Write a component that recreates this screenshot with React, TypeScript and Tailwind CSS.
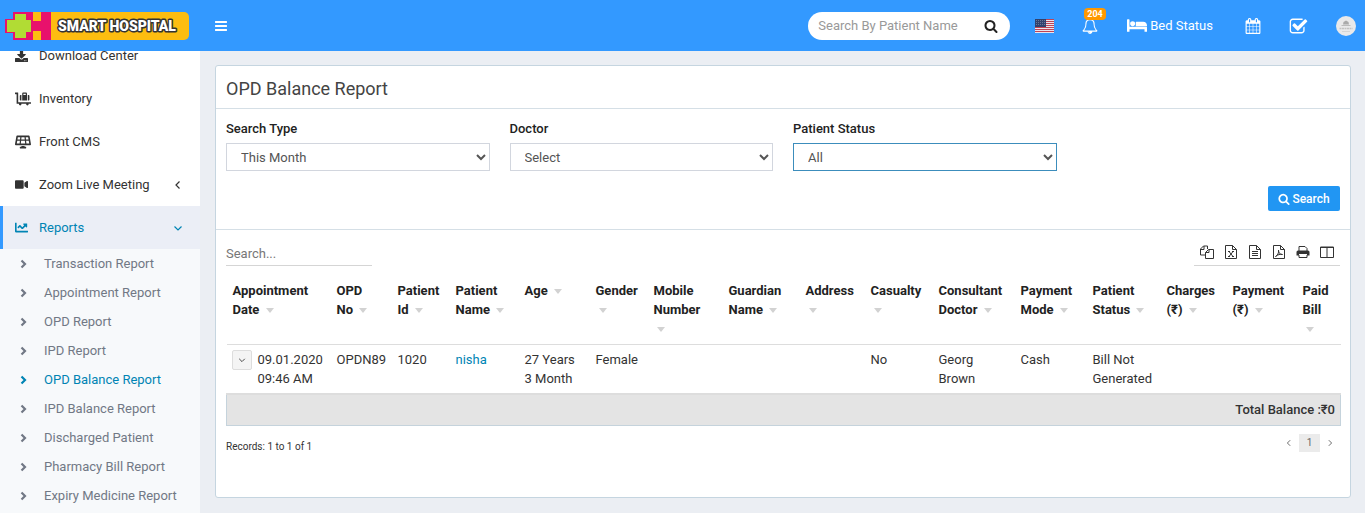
import React from "react";
import { FaChartLine, FaDownload, FaLuggageCart, FaSolarPanel, FaVideo } from "react-icons/fa";

const glyphs = {
  bars: "M1664 1344v128q0 26-19 45t-45 19h-1408q-26 0-45-19t-19-45v-128q0-26 19-45t45-19h1408q26 0 45 19t19 45zm0-512v128q0 26-19 45t-45 19h-1408q-26 0-45-19t-19-45v-128q0-26 19-45t45-19h1408q26 0 45 19t19 45zm0-512v128q0 26-19 45t-45 19h-1408q-26 0-45-19t-19-45v-128q0-26 19-45t45-19h1408q26 0 45 19t19 45z",
  search: "M1216 832q0-185-131.5-316.5t-316.5-131.5-316.5 131.5-131.5 316.5 131.5 316.5 316.5 131.5 316.5-131.5 131.5-316.5zm512 832q0 52-38 90t-90 38q-54 0-90-38l-343-342q-179 124-399 124-143 0-273.5-55.5t-225-150-150-225-55.5-273.5 55.5-273.5 150-225 225-150 273.5-55.5 273.5 55.5 225 150 150 225 55.5 273.5q0 220-124 399l343 343q37 37 37 90z",
  check: "M1472 930v318q0 119-84.5 203.5t-203.5 84.5h-832q-119 0-203.5-84.5t-84.5-203.5v-832q0-119 84.5-203.5t203.5-84.5h832q63 0 117 25 15 7 18 23 3 17-9 29l-49 49q-10 10-23 10-3 0-9-2-23-6-45-6h-832q-66 0-113 47t-47 113v832q0 66 47 113t113 47h832q66 0 113-47t47-113v-254q0-13 9-22l64-64q10-10 23-10 6 0 12 3 20 8 20 29zm231-489l-814 814q-24 24-57 24t-57-24l-430-430q-24-24-24-57t24-57l110-110q24-24 57-24t57 24l263 263 647-647q24-24 57-24t57 24l110 110q24 24 24 57t-24 57z",
  bed: "M256 1024h1728q26 0 45 19t19 45v448h-256v-256h-1536v256h-256v-1216q0-26 19-45t45-19h128q26 0 45 19t19 45v704zm576-320q0-106-75-181t-181-75-181 75-75 181 75 181 181 75 181-75 75-181zm1216 256v-64q0-159-112.5-271.5t-271.5-112.5h-704q-26 0-45 19t-19 45v384h1152z",
  calendar: "M192 1664h288v-288h-288v288zm352 0h320v-288h-320v288zm-352-352h288v-320h-288v320zm352 0h320v-320h-320v320zm-352-384h288v-288h-288v288zm736 736h320v-288h-320v288zm-384-736h320v-288h-320v288zm768 736h288v-288h-288v288zm-384-352h320v-320h-320v320zm-352-864v-288q0-13-9.5-22.5t-22.5-9.5h-64q-13 0-22.5 9.5t-9.5 22.5v288q0 13 9.5 22.5t22.5 9.5h64q13 0 22.5-9.5t9.5-22.5zm736 864h288v-320h-288v320zm-384-384h320v-288h-320v288zm384 0h288v-288h-288v288zm32-480v-288q0-13-9.5-22.5t-22.5-9.5h-64q-13 0-22.5 9.5t-9.5 22.5v288q0 13 9.5 22.5t22.5 9.5h64q13 0 22.5-9.5t9.5-22.5zm384-64v1280q0 52-38 90t-90 38h-1408q-52 0-90-38t-38-90v-1280q0-52 38-90t90-38h128v-96q0-66 47-113t113-47h64q66 0 113 47t47 113v96h384v-96q0-66 47-113t113-47h64q66 0 113 47t47 113v96h128q52 0 90 38t38 90z",
  bell: "M912 1696q0-16-16-16-59 0-101.5-42.5t-42.5-101.5q0-16-16-16t-16 16q0 73 51.5 124.5t124.5 51.5q16 0 16-16zm-666-288h1300q-266-300-266-832 0-51-24-105t-69-103-121.5-80.5-169.5-31.5-169.5 31.5-121.5 80.5-69 103-24 105q0 532-266 832zm1482 0q0 52-38 90t-90 38h-448q0 106-75 181t-181 75-181-75-75-181h-448q-52 0-90-38t-38-90q50-42 91-88t85-119.5 74.5-158.5 50-206 19.5-260q0-152 117-282.5t307-158.5q-8-19-8-39 0-40 28-68t68-28 68 28 28 68q0 20-8 39 190 28 307 158.5t117 282.5q0 139 19.5 260t50 206 74.5 158.5 85 119.5 91 88z",
};

function Glyph({ name, className, box = "0 0 1792 1792" }: { name: keyof typeof glyphs; className: string; box?: string }) {
  return (
    <svg viewBox={box} className={className} fill="currentColor" aria-hidden="true">
      <path d={glyphs[name]} />
    </svg>
  );
}

function Angle({ dir, className, weight = 1.2 }: { dir: "left" | "right" | "down"; className: string; weight?: number }) {
  const d = { left: "M6.5 1.5 3 5l3.5 3.5", right: "M3.5 1.5 7 5 3.5 8.5", down: "M1.5 3.5 5 7l3.5-3.5" }[dir];
  return (
    <svg viewBox="0 0 10 10" className={className} fill="none" stroke="currentColor" strokeWidth={weight} aria-hidden="true">
      <path d={d} />
    </svg>
  );
}

function Logo() {
  return (
    <svg viewBox="0 0 184 28" className="h-7 w-[184px]" role="img" aria-label="Smart Hospital">
      <path d="M26 0h153a5 5 0 0 1 5 5v18a5 5 0 0 1-5 5H26z" fill="#fdbd10" />
      <path d="M8 0h20v9h8V0h10v28H36v-9h-8v9H8v-7H0V7h8z" fill="#e8116c" />
      <path d="M10 2h11v6h5v12h-5v6H10v-6H2V8h8z" fill="#b1dc34" />
      <text
        x="53"
        y="19"
        fontFamily="Roboto, sans-serif"
        fontSize="14"
        fontWeight="900"
        fill="#fff"
        stroke="#333"
        strokeWidth="3"
        strokeLinejoin="round"
        paintOrder="stroke"
      >
        SMART HOSPITAL
      </text>
    </svg>
  );
}

function Flag() {
  return (
    <svg viewBox="0 0 19 14" className="h-3.5 w-[19px]" role="img" aria-label="English">
      <rect width="19" height="14" fill="#e9e4ee" />
      {[0, 2, 4, 6, 8, 10, 12].map((y) => (
        <rect key={y} y={y} width="19" height="1" fill="#bf4455" />
      ))}
      <rect width="11" height="8" fill="#31416e" />
      <path d="M1 1.5h10M1 3.5h10M1 5.5h10" stroke="#6b7699" strokeDasharray="1 1" />
    </svg>
  );
}

const menu = [
  { label: "Download Center", icon: <FaDownload className="size-[13px]" /> },
  { label: "Inventory", icon: <FaLuggageCart className="size-4" /> },
  { label: "Front CMS", icon: <FaSolarPanel className="size-4" /> },
  { label: "Zoom Live Meeting", icon: <FaVideo className="size-[13px]" />, more: true },
];

const reports = [
  "Transaction Report",
  "Appointment Report",
  "OPD Report",
  "IPD Report",
  "OPD Balance Report",
  "IPD Balance Report",
  "Discharged Patient",
  "Pharmacy Bill Report",
  "Expiry Medicine Report",
];

function Header() {
  return (
    <header className="flex h-[51px] shrink-0 items-center bg-[#3399ff] text-white">
      <a href="#" className="w-[200px] shrink-0 pl-[5px]">
        <Logo />
      </a>
      <button aria-label="Toggle navigation" className="ml-3.5">
        <Glyph name="bars" className="size-3.5" />
      </button>
      <div className="ml-auto flex items-center">
        <form className="flex h-7 w-[202px] items-center rounded-full bg-white pr-3 pl-2.5">
          <input
            aria-label="Search By Patient Name"
            placeholder="Search By Patient Name"
            className="w-full min-w-0 text-[13px] text-[#444] outline-none placeholder:text-[#999]"
          />
          <button type="button" aria-label="Search" className="text-[#222]">
            <Glyph name="search" className="size-3.5" />
          </button>
        </form>
        <a href="#" className="ml-[25px]">
          <Flag />
        </a>
        <a href="#" aria-label="Notifications" className="relative ml-7">
          <Glyph name="bell" className="size-4" />
          <span className="absolute -top-2.5 left-0.5 rounded-sm bg-[#ff9800] px-[3px] text-[9px] leading-3 font-bold">204</span>
        </a>
        <a href="#" className="ml-[29px] flex items-center gap-[3px] text-[13px]">
          <Glyph name="bed" box="0 128 2048 1536" className="h-[15px] w-5" />
          Bed Status
        </a>
        <a href="#" aria-label="Calendar" className="ml-8">
          <Glyph name="calendar" className="size-4" />
        </a>
        <a href="#" aria-label="Tasks" className="ml-7">
          <Glyph name="check" box="0 0 1792 1664" className="h-[18px] w-[19px]" />
        </a>
        <a href="#" aria-label="Profile" className="mr-[9px] ml-7">
          <svg viewBox="0 0 20 20" className="size-5" aria-hidden="true">
            <circle cx="10" cy="10" r="10" fill="#e9e9ea" />
            <path d="M7 8.500 7.500 6 10 4.500 12.500 6 13 8.500z" fill="#aaa" />
            <path d="M5.500 9.500h9" stroke="#bbb" />
            <path d="M3.500 12.500h13" stroke="#c2c2c2" strokeDasharray="2 .5" strokeWidth="1.500" />
            <path d="M6 15.500h8" stroke="#d5d5d5" />
          </svg>
        </a>
      </div>
    </header>
  );
}

function Sidebar() {
  return (
    <aside className="w-[200px] shrink-0 overflow-hidden bg-[#f7f9fb]">
      <nav className="-mt-[17px]">
        <ul>
          {menu.map((m) => (
            <li key={m.label}>
              <a href="#" className="flex h-[43px] items-center bg-white pl-[15px] text-[13px] text-[#333]">
                <span className="w-6">{m.icon}</span>
                {m.label}
                {m.more && <Angle dir="left" className="mr-[17px] ml-auto size-2.5" />}
              </a>
            </li>
          ))}
          <li>
            <a href="#" className="flex h-[43px] items-center border-l-3 border-[#3399ff] bg-[#ebeef6] pl-3 text-[13px] text-[#0084b4]">
              <span className="w-6">
                <FaChartLine className="size-[13px]" />
              </span>
              Reports
              <Angle dir="down" className="mr-[17px] ml-auto size-2.5" />
            </a>
            <ul>
              {reports.map((r) => (
                <li key={r}>
                  <a
                    href="#"
                    className={
                      "flex h-[29px] items-center pl-[18px] text-[13px] " +
                      (r === "OPD Balance Report" ? "text-[#0084b4]" : "text-[#717885]")
                    }
                  >
                    <Angle dir="right" weight={2.2} className="mr-4 size-2.5" />
                    {r}
                  </a>
                </li>
              ))}
            </ul>
          </li>
        </ul>
      </nav>
    </aside>
  );
}

function Field({ id, label, value, active }: { id: string; label: string; value: string; active?: boolean }) {
  return (
    <div>
      <label htmlFor={id} className="block text-[13px] leading-5 font-medium text-[#222]">
        {label}
      </label>
      <select
        id={id}
        className={"mt-1 h-7 w-full border bg-white pl-2.5 text-[13px] text-[#555] outline-none " + (active ? "border-[#3c8dbc]" : "border-[#d2d6de]")}
      >
        <option>{value}</option>
      </select>
    </div>
  );
}

const page = "M1.500 .5h7l4 4v9h-11zM8.500 .5v4h4";

const tools = [
  { label: "Copy", d: "M5.500 10H.5V4L3.500 1h4v3M.5 4.500h3.500V1M5.500 7.500l3-3h5v9h-8zM5.500 7.500h3.500v-3" },
  { label: "Excel", d: page + "M5 6.500l4 5M9 6.500l-4 5M4 6.500h2M8 6.500h2M4 11.500h2M8 11.500h2" },
  { label: "CSV", d: page + "M4 6.500h6M4 8.500h6M4 10.500h6" },
  { label: "PDF", d: page + "M3.500 11.500c2-1 3.500-3.500 3-6.500C6.500 8 8 9.500 10.500 9.500 8 9 6 9.500 3.500 11.500" },
  { label: "Print", d: "" },
  { label: "Columns", d: "M.5 2h13v10.500H.5zM7 2.500V12M.5 2.500h13" },
];

function ToolIcon({ d }: { d: string }) {
  if (!d) {
    return (
      <svg viewBox="0 0 14 14" className="size-3.5" aria-hidden="true">
        <path d="M3 6V1.500h6l2 2V6M3 10v2.500h8V10" fill="none" stroke="#333" />
        <path d="M2 5.500h10q1.500 0 1.500 1.500V10.500H11V9H3v1.500H.5V7q0-1.500 1.500-1.500z" fill="#333" />
      </svg>
    );
  }
  return (
    <svg viewBox="0 0 14 14" className="size-3.5" fill="none" stroke="#333" aria-hidden="true">
      <path d={d} />
    </svg>
  );
}

const columns = [
  { title: "Appointment Date", width: "w-[104px]" },
  { title: "OPD No", width: "w-[61px]", value: "OPDN89" },
  { title: "Patient Id", width: "w-[58px]", value: "1020" },
  { title: "Patient Name", width: "w-[69px]", value: "nisha" },
  { title: "Age", width: "w-[71px]", value: "27 Years 3 Month" },
  { title: "Gender", width: "w-[58px]", value: "Female" },
  { title: "Mobile Number", width: "w-[75px]" },
  { title: "Guardian Name", width: "w-[77px]" },
  { title: "Address", width: "w-[65px]" },
  { title: "Casualty", width: "w-[68px]", value: "No" },
  { title: "Consultant Doctor", width: "w-[82px]", value: "Georg Brown" },
  { title: "Payment Mode", width: "w-[72px]", value: "Cash" },
  { title: "Patient Status", width: "w-[74px]", value: "Bill Not Generated" },
  { title: "Charges (₹)", width: "w-[66px]" },
  { title: "Payment (₹)", width: "w-[70px]" },
  { title: "Paid Bill", width: "w-[44px]" },
];

function ReportTable() {
  return (
    <table className="mt-2.5 w-full table-fixed border-collapse text-left text-[13px] leading-[19px] text-[#333]">
      <colgroup>
        {columns.map((c) => (
          <col key={c.title} className={c.width} />
        ))}
      </colgroup>
      <thead>
        <tr className="border-b border-[#ddd]">
          {columns.map((c) => (
            <th key={c.title} className="pt-[5px] pr-2.5 pb-1.5 pl-1.5 align-top font-bold text-[#222]">
              {c.title}{" "}
              <span className="inline-block pl-[3px] align-middle">
                <svg viewBox="0 0 8 5" className="block h-[5px] w-2" aria-hidden="true">
                  <path d="M0 0h8L4 5z" fill="#d2d2d2" />
                </svg>
              </span>
            </th>
          ))}
        </tr>
      </thead>
      <tbody>
        <tr>
          <td className="py-[5px] pl-[5px] align-top">
            <div className="flex gap-1.5">
              <button aria-label="Show details" className="flex size-5 shrink-0 items-center justify-center rounded-xs border border-[#ddd] bg-[#f4f4f4] text-[#444]">
                <Angle dir="down" className="size-2" />
              </button>
              <span>09.01.2020 09:46 AM</span>
            </div>
          </td>
          {columns.slice(1).map((c) => (
            <td key={c.title} className="py-[5px] pr-2.5 pl-1.5 align-top">
              {c.value === "nisha" ? (
                <a href="#" className="text-[#0084b4]">
                  nisha
                </a>
              ) : (
                c.value
              )}
            </td>
          ))}
        </tr>
      </tbody>
      <tfoot>
        <tr>
          <td colSpan={16} className="h-[31px] border border-t-2 border-[#c5d3dc] border-t-[#ddd] bg-[#e4e4e4] pr-[5px] text-right font-medium">
            Total Balance :₹0
          </td>
        </tr>
      </tfoot>
    </table>
  );
}

export default function App() {
  return (
    <div className="flex h-screen flex-col overflow-hidden bg-[#ebeef3] font-['Roboto',sans-serif]">
      <Header />
      <div className="flex min-h-0 flex-1">
        <Sidebar />
        <main className="min-w-0 flex-1 pt-3.5 pr-3.5 pb-[15px] pl-[15px]">
          <section className="flex h-full flex-col rounded-[3px] border border-[#c5d5e0] bg-white">
            <h1 className="h-[43px] border-b border-[#d5dfe6] px-2.5 text-[18px] leading-[45px] font-normal text-[#444]">OPD Balance Report</h1>
            <form className="border-b border-[#d5dfe6] px-2.5 pt-2.5 pb-[18px]">
              <div className="grid grid-cols-4 gap-x-5">
                <Field id="type" label="Search Type" value="This Month" />
                <Field id="doctor" label="Doctor" value="Select" />
                <Field id="status" label="Patient Status" value="All" active />
              </div>
              <button type="button" className="mt-[15px] ml-auto flex h-[25px] w-[72px] items-center justify-center gap-0.5 rounded-xs bg-[#2196f3] text-[12px] font-medium text-white">
                <Glyph name="search" className="size-3" />
                Search
              </button>
            </form>
            <div className="px-2.5">
              <div className="flex items-end justify-between pt-3">
                <input
                  aria-label="Search..."
                  placeholder="Search..."
                  className="h-6 w-[146px] border-b border-[#d5d5d5] text-[13px] outline-none placeholder:text-[#777]"
                />
                <div className="flex h-6 items-center justify-between gap-2.5 border-b border-[#d5d5d5] px-1.5 pb-1">
                  {tools.map((t) => (
                    <button key={t.label} aria-label={t.label}>
                      <ToolIcon d={t.d} />
                    </button>
                  ))}
                </div>
              </div>
              <ReportTable />
              <div className="flex items-center justify-between pt-1.5 text-[10px] text-[#333]">
                <p className="pt-[7px]">Records: 1 to 1 of 1</p>
                <div className="flex items-center pr-1.5 text-[#666]">
                  <button aria-label="Previous">
                    <Angle dir="left" className="size-2" />
                  </button>
                  <button className="mx-1.5 h-[18px] w-[21px] bg-[#ebebeb] text-[10px]">1</button>
                  <button aria-label="Next">
                    <Angle dir="right" className="size-2" />
                  </button>
                </div>
              </div>
            </div>
          </section>
        </main>
      </div>
    </div>
  );
}
